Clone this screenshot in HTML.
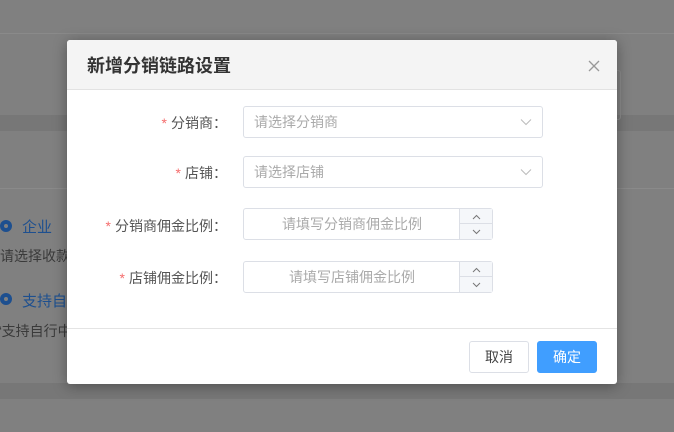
<!DOCTYPE html>
<html><head><meta charset="utf-8"><style>
*{box-sizing:border-box;margin:0;padding:0}
body{width:674px;height:432px;overflow:hidden;background:#808080;font-family:"Liberation Sans","Noto Sans CJK SC",sans-serif;position:relative}
.a{position:absolute}
.bg{color:#3a3a3a;font-size:14px}
.blue{color:#1d4f8f}
.radio{width:12px;height:12px;border-radius:50%;background:#1d4f8f;border:0}
.radio::after{content:"";position:absolute;left:4px;top:4px;width:4px;height:4px;border-radius:50%;background:#808080}
.dlg{left:67px;top:40px;width:550px;height:344px;background:#fff;border-radius:3px;box-shadow:0 2px 14px rgba(0,0,0,.35);overflow:hidden}
.hd{left:0;top:0;width:550px;height:50px;background:#f4f4f4;border-bottom:1px solid #e2e2e2}
.lbl{font-size:14px;color:#555;text-align:right;width:200px;left:-40px}
.lbl b{color:#f56c6c;font-weight:normal;margin-right:4px}
.sel{left:176px;width:300px;height:32px;border:1px solid #dcdfe6;border-radius:3px;font-size:14px;color:#aaa;padding-left:10px;line-height:30px}
.num{left:176px;width:250px;height:32px;border:1px solid #dcdfe6;border-radius:3px;font-size:14px;color:#aaa;line-height:30px}
.num .t{position:absolute;left:0;width:216px;text-align:center}
.num .s{position:absolute;right:0;top:0;width:33px;height:30px;background:#f5f7fa;border-left:1px solid #dcdfe6}
.num .s div{height:15px;border-bottom:1px solid #dcdfe6}
.btn{height:32px;width:60px;border-radius:3px;font-size:14px;text-align:center;line-height:30px}
</style></head><body>
<div class="a" style="left:0;top:33px;width:674px;height:1px;background:#8a8a8a"></div>
<div class="a" style="left:0;top:115px;width:674px;height:16px;background:#777"></div>
<div class="a" style="left:0;top:188px;width:674px;height:1px;background:#8a8a8a"></div>
<div class="a" style="left:0;top:383px;width:674px;height:16px;background:#777"></div>
<div class="a" style="left:560px;top:70px;width:61px;height:50px;border:1px solid #8c8c8c;border-radius:3px"></div>
<div class="a radio" style="left:0;top:220px"></div>
<div class="a bg blue" style="left:22px;top:216px;font-size:15px">企业</div>
<div class="a bg" style="left:0;top:246px">请选择收款</div>
<div class="a radio" style="left:0;top:293px"></div>
<div class="a bg blue" style="left:22px;top:290px;font-size:15px">支持自行</div>
<div class="a bg" style="left:-3px;top:321px">“支持自行中</div>

<div class="a dlg">
 <div class="a hd"></div>
 <div class="a" style="left:20px;top:12px;font-size:18px;font-weight:bold;color:#333">新增分销链路设置</div>
 <svg class="a" style="left:521px;top:20px" width="12" height="12" viewBox="0 0 12 12"><path d="M1 1L11 11M11 1L1 11" stroke="#999" stroke-width="1.3"/></svg>

 <div class="a lbl" style="top:73px"><b>*</b>分销商：</div>
 <div class="a sel" style="top:66px">请选择分销商<svg style="position:absolute;right:10px;top:11px" width="12" height="8" viewBox="0 0 12 8"><path d="M1 1.5L6 6.5L11 1.5" stroke="#bbb" fill="none"/></svg></div>
 <div class="a lbl" style="top:123px"><b>*</b>店铺：</div>
 <div class="a sel" style="top:116px">请选择店铺<svg style="position:absolute;right:10px;top:11px" width="12" height="8" viewBox="0 0 12 8"><path d="M1 1.5L6 6.5L11 1.5" stroke="#bbb" fill="none"/></svg></div>
 <div class="a lbl" style="top:176px"><b>*</b>分销商佣金比例：</div>
 <div class="a num" style="top:168px"><div class="t">请填写分销商佣金比例</div><div class="s"><div></div>
  <svg style="position:absolute;left:12px;top:5px" width="9" height="6" viewBox="0 0 9 6"><path d="M1 5L4.5 1.5L8 5" stroke="#777" fill="none"/></svg>
  <svg style="position:absolute;left:12px;top:20px" width="9" height="6" viewBox="0 0 9 6"><path d="M1 1L4.5 4.5L8 1" stroke="#777" fill="none"/></svg></div></div>
 <div class="a lbl" style="top:228px"><b>*</b>店铺佣金比例：</div>
 <div class="a num" style="top:221px"><div class="t">请填写店铺佣金比例</div><div class="s"><div></div>
  <svg style="position:absolute;left:12px;top:5px" width="9" height="6" viewBox="0 0 9 6"><path d="M1 5L4.5 1.5L8 5" stroke="#777" fill="none"/></svg>
  <svg style="position:absolute;left:12px;top:20px" width="9" height="6" viewBox="0 0 9 6"><path d="M1 1L4.5 4.5L8 1" stroke="#777" fill="none"/></svg></div></div>

 <div class="a" style="left:0;top:288px;width:550px;height:1px;background:#e4e4e4"></div>
 <div class="a btn" style="left:402px;top:301px;border:1px solid #dcdfe6;color:#444">取消</div>
 <div class="a btn" style="left:470px;top:301px;background:#409eff;color:#fff;border:1px solid #409eff">确定</div>
</div>
</body></html>
